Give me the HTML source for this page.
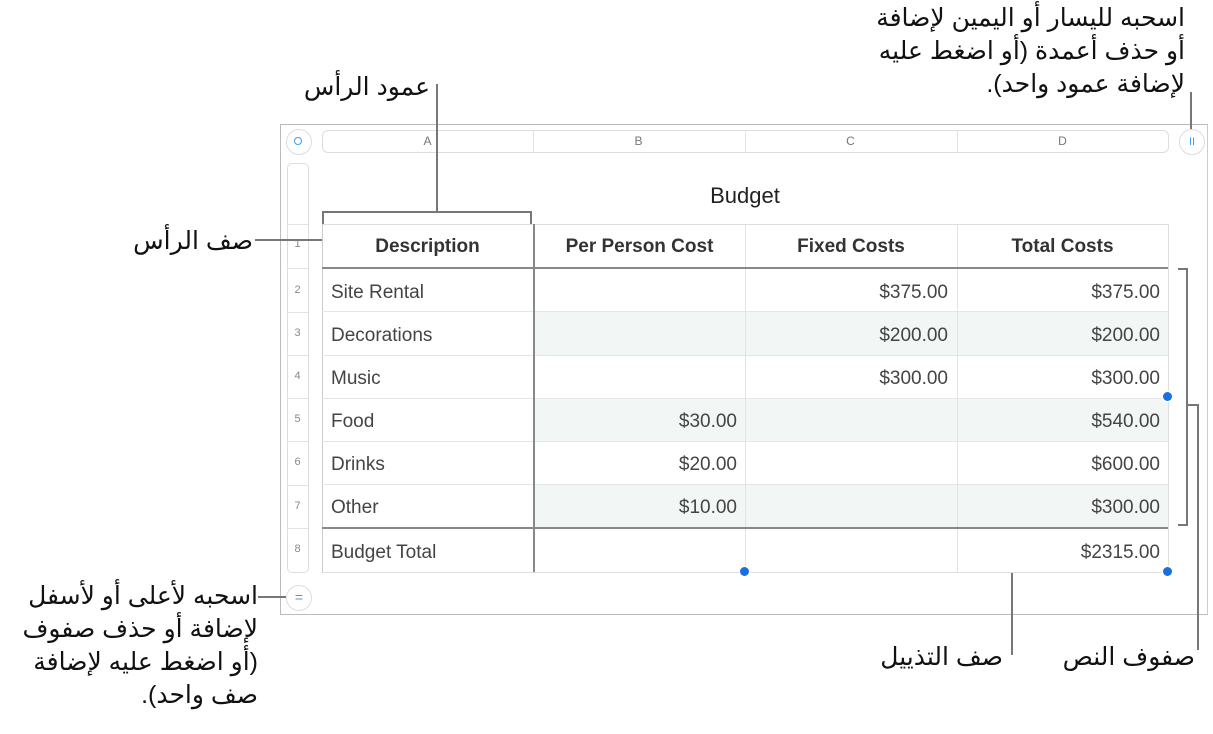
<!DOCTYPE html>
<html><head><meta charset="utf-8"><style>
body{margin:0;width:1213px;height:734px;background:#fff;position:relative;overflow:hidden;font-family:"Liberation Sans",sans-serif}
.a{position:absolute;font-family:"Liberation Sans","Noto Sans CJK SC","DejaVu Sans",sans-serif;font-size:25px;color:#111;direction:rtl;text-align:right;line-height:33px;white-space:nowrap}
.ab{position:absolute}
.t{position:absolute;font-size:19px;color:#444}
.r{text-align:right}
.rn{position:absolute;left:287px;width:21px;text-align:center;font-size:11px;color:#888}
.ch{position:absolute;top:130px;font-size:12px;color:#777;text-align:center;width:211px;line-height:22px}
</style></head><body>
<div class="ab" style="left:280px;top:124px;width:926px;height:489px;border:1px solid #bbb;border-right-color:#ccc"></div>
<div class="ab" style="left:322px;top:130px;width:845px;height:21px;border:1px solid #ddd;border-radius:6px"></div>
<div class="ab" style="left:533px;top:131px;width:1px;height:21px;background:#e3e3e3"></div>
<div class="ab" style="left:745px;top:131px;width:1px;height:21px;background:#e3e3e3"></div>
<div class="ab" style="left:957px;top:131px;width:1px;height:21px;background:#e3e3e3"></div>
<div class="ch" style="left:322px">A</div><div class="ch" style="left:533px">B</div><div class="ch" style="left:745px">C</div><div class="ch" style="left:957px">D</div>
<div class="ab" style="left:286px;top:129px;width:24px;height:24px;border:1px solid #ddd;border-radius:50%"></div>
<div class="ab" style="left:294px;top:137px;width:6px;height:6px;border:1.5px solid #3b9cf0;border-radius:50%"></div>
<div class="ab" style="left:1179px;top:129px;width:24px;height:24px;border:1px solid #ddd;border-radius:50%;color:#3b9cf0;font-size:11px;text-align:center;line-height:24px">II</div>
<div class="ab" style="left:286px;top:585px;width:24px;height:24px;border:1px solid #ddd;border-radius:50%;color:#3b9cf0;font-size:14px;text-align:center;line-height:23px">=</div>
<div class="ab" style="left:287px;top:163px;width:20px;height:408px;border:1px solid #ddd;border-radius:5px"></div>
<div class="t" style="left:322px;width:846px;top:183px;text-align:center;font-size:22px;color:#222">Budget</div>
<div class="ab" style="left:534px;top:312px;width:634px;height:43px;background:#f2f6f5"></div>
<div class="ab" style="left:534px;top:398px;width:634px;height:43px;background:#f2f6f5"></div>
<div class="ab" style="left:534px;top:485px;width:634px;height:43px;background:#f2f6f5"></div>
<div class="ab" style="left:322px;top:224px;width:845px;height:347px;border:1px solid #ddd;border-left-color:#ccc"></div>
<div class="ab" style="left:322px;top:311px;width:846px;height:1px;background:#e5e5e5"></div>
<div class="ab" style="left:322px;top:355px;width:846px;height:1px;background:#e5e5e5"></div>
<div class="ab" style="left:322px;top:398px;width:846px;height:1px;background:#e5e5e5"></div>
<div class="ab" style="left:322px;top:441px;width:846px;height:1px;background:#e5e5e5"></div>
<div class="ab" style="left:322px;top:484px;width:846px;height:1px;background:#e5e5e5"></div>
<div class="ab" style="left:745px;top:224px;width:1px;height:348px;background:#e3e3e3"></div>
<div class="ab" style="left:957px;top:224px;width:1px;height:348px;background:#e3e3e3"></div>
<div class="ab" style="left:533px;top:224px;width:2px;height:348px;background:#888"></div>
<div class="ab" style="left:322px;top:267px;width:846px;height:2px;background:#888"></div>
<div class="ab" style="left:322px;top:527px;width:846px;height:2px;background:#888"></div>
<div class="ab" style="left:287px;top:224px;width:21px;height:1px;background:#e3e3e3"></div>
<div class="ab" style="left:287px;top:268px;width:21px;height:1px;background:#e3e3e3"></div>
<div class="ab" style="left:287px;top:312px;width:21px;height:1px;background:#e3e3e3"></div>
<div class="ab" style="left:287px;top:355px;width:21px;height:1px;background:#e3e3e3"></div>
<div class="ab" style="left:287px;top:398px;width:21px;height:1px;background:#e3e3e3"></div>
<div class="ab" style="left:287px;top:441px;width:21px;height:1px;background:#e3e3e3"></div>
<div class="ab" style="left:287px;top:485px;width:21px;height:1px;background:#e3e3e3"></div>
<div class="ab" style="left:287px;top:528px;width:21px;height:1px;background:#e3e3e3"></div>
<div class="rn" style="top:238px">1</div><div class="rn" style="top:284px">2</div><div class="rn" style="top:327px">3</div><div class="rn" style="top:370px">4</div><div class="rn" style="top:413px">5</div><div class="rn" style="top:456px">6</div><div class="rn" style="top:500px">7</div><div class="rn" style="top:543px">8</div>
<div class="t" style="left:322px;width:211px;top:236px;text-align:center;font-weight:bold;color:#333">Description</div>
<div class="t" style="left:534px;width:211px;top:236px;text-align:center;font-weight:bold;color:#333">Per Person Cost</div>
<div class="t" style="left:745px;width:212px;top:236px;text-align:center;font-weight:bold;color:#333">Fixed Costs</div>
<div class="t" style="left:957px;width:211px;top:236px;text-align:center;font-weight:bold;color:#333">Total Costs</div>
<div class="t" style="left:331px;top:282px">Site Rental</div>
<div class="t" style="left:331px;top:325px">Decorations</div>
<div class="t" style="left:331px;top:368px">Music</div>
<div class="t" style="left:331px;top:411px">Food</div>
<div class="t" style="left:331px;top:454px">Drinks</div>
<div class="t" style="left:331px;top:497px">Other</div>
<div class="t" style="left:331px;top:542px">Budget Total</div>
<div class="t r" style="left:534px;width:203px;top:411px">$30.00</div>
<div class="t r" style="left:534px;width:203px;top:454px">$20.00</div>
<div class="t r" style="left:534px;width:203px;top:497px">$10.00</div>
<div class="t r" style="left:745px;width:203px;top:282px">$375.00</div>
<div class="t r" style="left:745px;width:203px;top:325px">$200.00</div>
<div class="t r" style="left:745px;width:203px;top:368px">$300.00</div>
<div class="t r" style="left:957px;width:203px;top:282px">$375.00</div>
<div class="t r" style="left:957px;width:203px;top:325px">$200.00</div>
<div class="t r" style="left:957px;width:203px;top:368px">$300.00</div>
<div class="t r" style="left:957px;width:203px;top:411px">$540.00</div>
<div class="t r" style="left:957px;width:203px;top:454px">$600.00</div>
<div class="t r" style="left:957px;width:203px;top:497px">$300.00</div>
<div class="t r" style="left:957px;width:203px;top:542px">$2315.00</div>
<div class="ab" style="left:1163px;top:392px;width:9px;height:9px;border-radius:50%;background:#1a6fe0;box-shadow:0 0 0 1.5px #fff"></div>
<div class="ab" style="left:740px;top:567px;width:9px;height:9px;border-radius:50%;background:#1a6fe0;box-shadow:0 0 0 1.5px #fff"></div>
<div class="ab" style="left:1163px;top:567px;width:9px;height:9px;border-radius:50%;background:#1a6fe0;box-shadow:0 0 0 1.5px #fff"></div>
<svg class="ab" style="left:0;top:0" width="1213" height="734"><g stroke="#777" stroke-width="2" fill="none">
<path d="M323 224V212H531V224M437 212V84"/>
<path d="M255 240H322"/>
<path d="M1191 92V129"/>
<path d="M258 597H286"/>
<path d="M1178 269H1187V525H1178M1187 405H1198V650"/>
<path d="M1012 573V655"/>
</g></svg>
<div class="a" style="right:783px;top:71px">عمود الرأس</div>
<div class="a" style="right:960px;top:225px">صف الرأس</div>
<div class="a" style="right:28px;top:2px">اسحبه لليسار أو اليمين لإضافة<br>أو حذف أعمدة (أو اضغط عليه<br>لإضافة عمود واحد).</div>
<div class="a" style="right:955px;top:580px">اسحبه لأعلى أو لأسفل<br>لإضافة أو حذف صفوف<br>(أو اضغط عليه لإضافة<br>صف واحد).</div>
<div class="a" style="right:210px;top:641px">صف التذييل</div>
<div class="a" style="right:18px;top:641px">صفوف النص</div>
</body></html>
